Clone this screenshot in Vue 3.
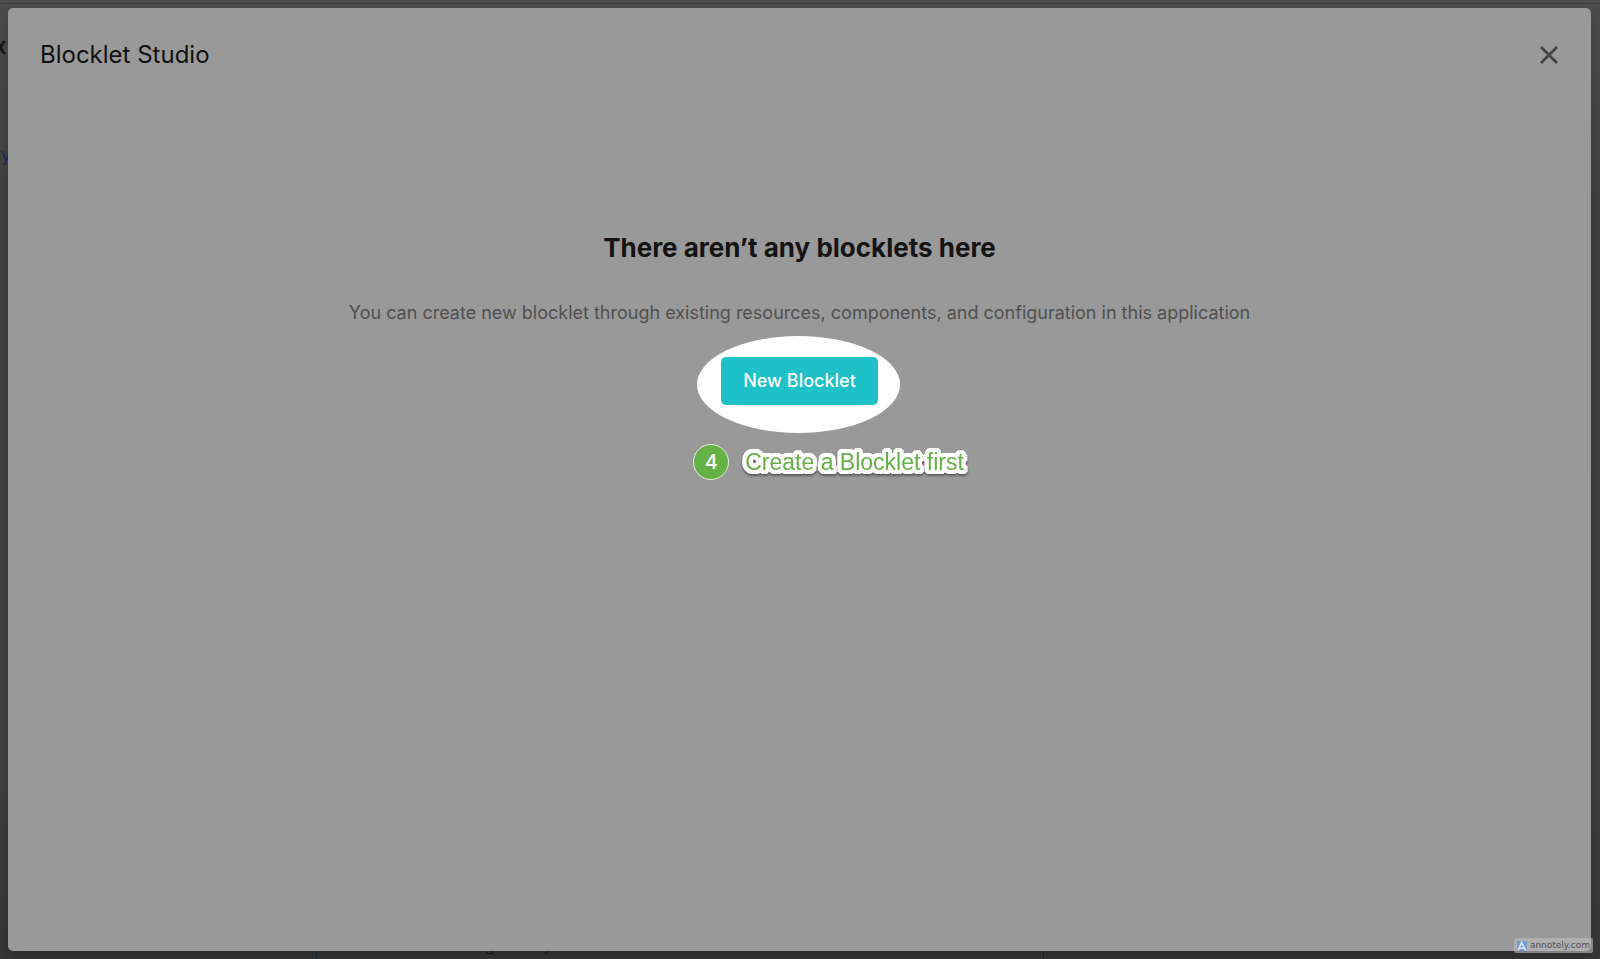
<script setup>
const title = 'Blocklet Studio'
</script>

<template>
  <div class="screen">
    <div class="page" aria-hidden="true">
      <div class="topline"></div>
      <span class="page-heading">x</span>
      <span class="page-link">ry</span>
      <div class="page-card">
        <span>g</span>
        <span>y</span>
      </div>
    </div>

    <section class="dialog" role="dialog" aria-labelledby="dialog-title">
      <header class="dialog-header">
        <h1 id="dialog-title">{{ title }}</h1>
        <button class="close" type="button" aria-label="Close">
          <svg viewBox="0 0 32 32" width="32" height="32">
            <path d="M9 9 23 23M23 9 9 23" fill="none" stroke="currentColor" stroke-width="2.8" stroke-linecap="square" />
          </svg>
        </button>
      </header>

      <main class="empty">
        <h2>There aren’t any blocklets here</h2>
        <p>You can create new blocklet through existing resources, components, and configuration in this application</p>
        <div class="action">
          <div class="spotlight"></div>
          <button class="primary" type="button">New Blocklet</button>
          <div class="note">
            <span class="step">4</span>
            <span class="note-text">Create a Blocklet first</span>
          </div>
        </div>
      </main>
    </section>

    <div class="watermark">
      <svg viewBox="0 0 10 10" width="10" height="10">
        <rect width="10" height="10" fill="#6f9ad6" />
        <path d="M1.6 8.4 4.6 1.4 8.2 8.2 5.8 7 3.4 7.2Z" fill="none" stroke="#dce6f2" stroke-width="1.5" />
      </svg>
      <span>annotely.com</span>
    </div>
  </div>
</template>

<style>
body {
  margin: 0;
}
</style>

<style scoped>
.screen {
  position: relative;
  box-sizing: border-box;
  display: flex;
  min-height: 100vh;
  padding: 8px 9px 8px 8px;
  overflow: hidden;
  background: #414141;
  font-family: Inter, "Liberation Sans", sans-serif;
}

.page {
  position: absolute;
  inset: 0;
  overflow: hidden;
  background: linear-gradient(#4d4d4d, #424242 20%, #404040 80%, #373737);
}

.topline {
  height: 1px;
  margin-top: 3px;
  background: #3b3b3b;
}

.page-heading {
  position: absolute;
  top: 30px;
  left: -7px;
  color: #151515;
  font-size: 24px;
  line-height: 32px;
  font-weight: 600;
}

.page-link {
  position: absolute;
  top: 145px;
  left: -6px;
  color: #1d2c5c;
  font-size: 18px;
  line-height: 20px;
}

.page-card {
  position: absolute;
  bottom: 0;
  left: 316px;
  right: 556px;
  box-sizing: border-box;
  display: flex;
  gap: 48px;
  height: 24px;
  padding-left: 168px;
  border: solid #1b2744;
  border-width: 0 1px;
  color: #181818;
  font-size: 16px;
  line-height: 20px;
}

.dialog {
  position: relative;
  flex: 1;
  display: flex;
  flex-direction: column;
  border-radius: 5px;
  background: #999;
  box-shadow: 0 8px 16px rgba(0, 0, 0, 0.2);
}

.dialog-header {
  display: flex;
  align-items: center;
  justify-content: space-between;
  padding: 31px 26px 30px 32px;
}

h1,
h2,
p {
  margin: 0;
}

h1 {
  color: #111;
  font-size: 24px;
  line-height: 32px;
  font-weight: 400;
}

button {
  border: 0;
  font-family: inherit;
  cursor: pointer;
}

.close {
  display: flex;
  padding: 0;
  background: none;
  color: #444;
}

.empty {
  display: flex;
  flex-direction: column;
  align-items: center;
  padding-top: 131px;
}

h2 {
  color: #141414;
  font-size: 26px;
  line-height: 32px;
  font-weight: 700;
}

p {
  margin-top: 37px;
  color: #505050;
  font-size: 18px;
  line-height: 24px;
}

.action {
  position: relative;
  margin-top: 32px;
}

.spotlight {
  position: absolute;
  inset: -21px -22px -28px -24px;
  border-radius: 50%;
  background: #fff;
}

.primary {
  position: relative;
  padding: 12px 22px;
  border-radius: 5px;
  background: #1dc1c7;
  color: #fff;
  font-size: 18px;
  line-height: 24px;
  font-weight: 500;
}

.note {
  position: absolute;
  top: 87px;
  left: -28px;
  display: flex;
  align-items: center;
  gap: 16px;
  white-space: nowrap;
}

.step {
  box-sizing: border-box;
  width: 36px;
  height: 36px;
  border: 1px solid #e6f0e2;
  border-radius: 50%;
  background: #65b047;
  color: #fff;
  font: 500 20px/34px Inter, "Liberation Sans", sans-serif;
  text-align: center;
}

.note-text {
  color: #65b047;
  font: 23px/36px "Liberation Sans", Arial, sans-serif;
  text-shadow:
    4px 0 #fff, -4px 0 #fff, 0 4px #fff, 0 -4px #fff,
    3px 3px #fff, -3px 3px #fff, 3px -3px #fff, -3px -3px #fff,
    4px 2px #fff, -4px 2px #fff, 4px -2px #fff, -4px -2px #fff,
    2px 4px #fff, -2px 4px #fff, 2px -4px #fff, -2px -4px #fff,
    2px 2px #fff, -2px 2px #fff, 2px -2px #fff, -2px -2px #fff,
    3px 0 #fff, -3px 0 #fff, 0 3px #fff, 0 -3px #fff,
    1px 0 #fff, -1px 0 #fff, 0 1px #fff, 0 -1px #fff;
  filter: drop-shadow(0 2px 1px rgba(0, 0, 0, 0.4));
}

.watermark {
  position: absolute;
  right: 7px;
  bottom: 6px;
  display: flex;
  align-items: center;
  gap: 3px;
  padding: 0 3px;
  border-radius: 2px;
  background: rgba(190, 190, 190, 0.6);
  color: #505050;
  font: 9px/15px "DejaVu Sans", sans-serif;
}
</style>
